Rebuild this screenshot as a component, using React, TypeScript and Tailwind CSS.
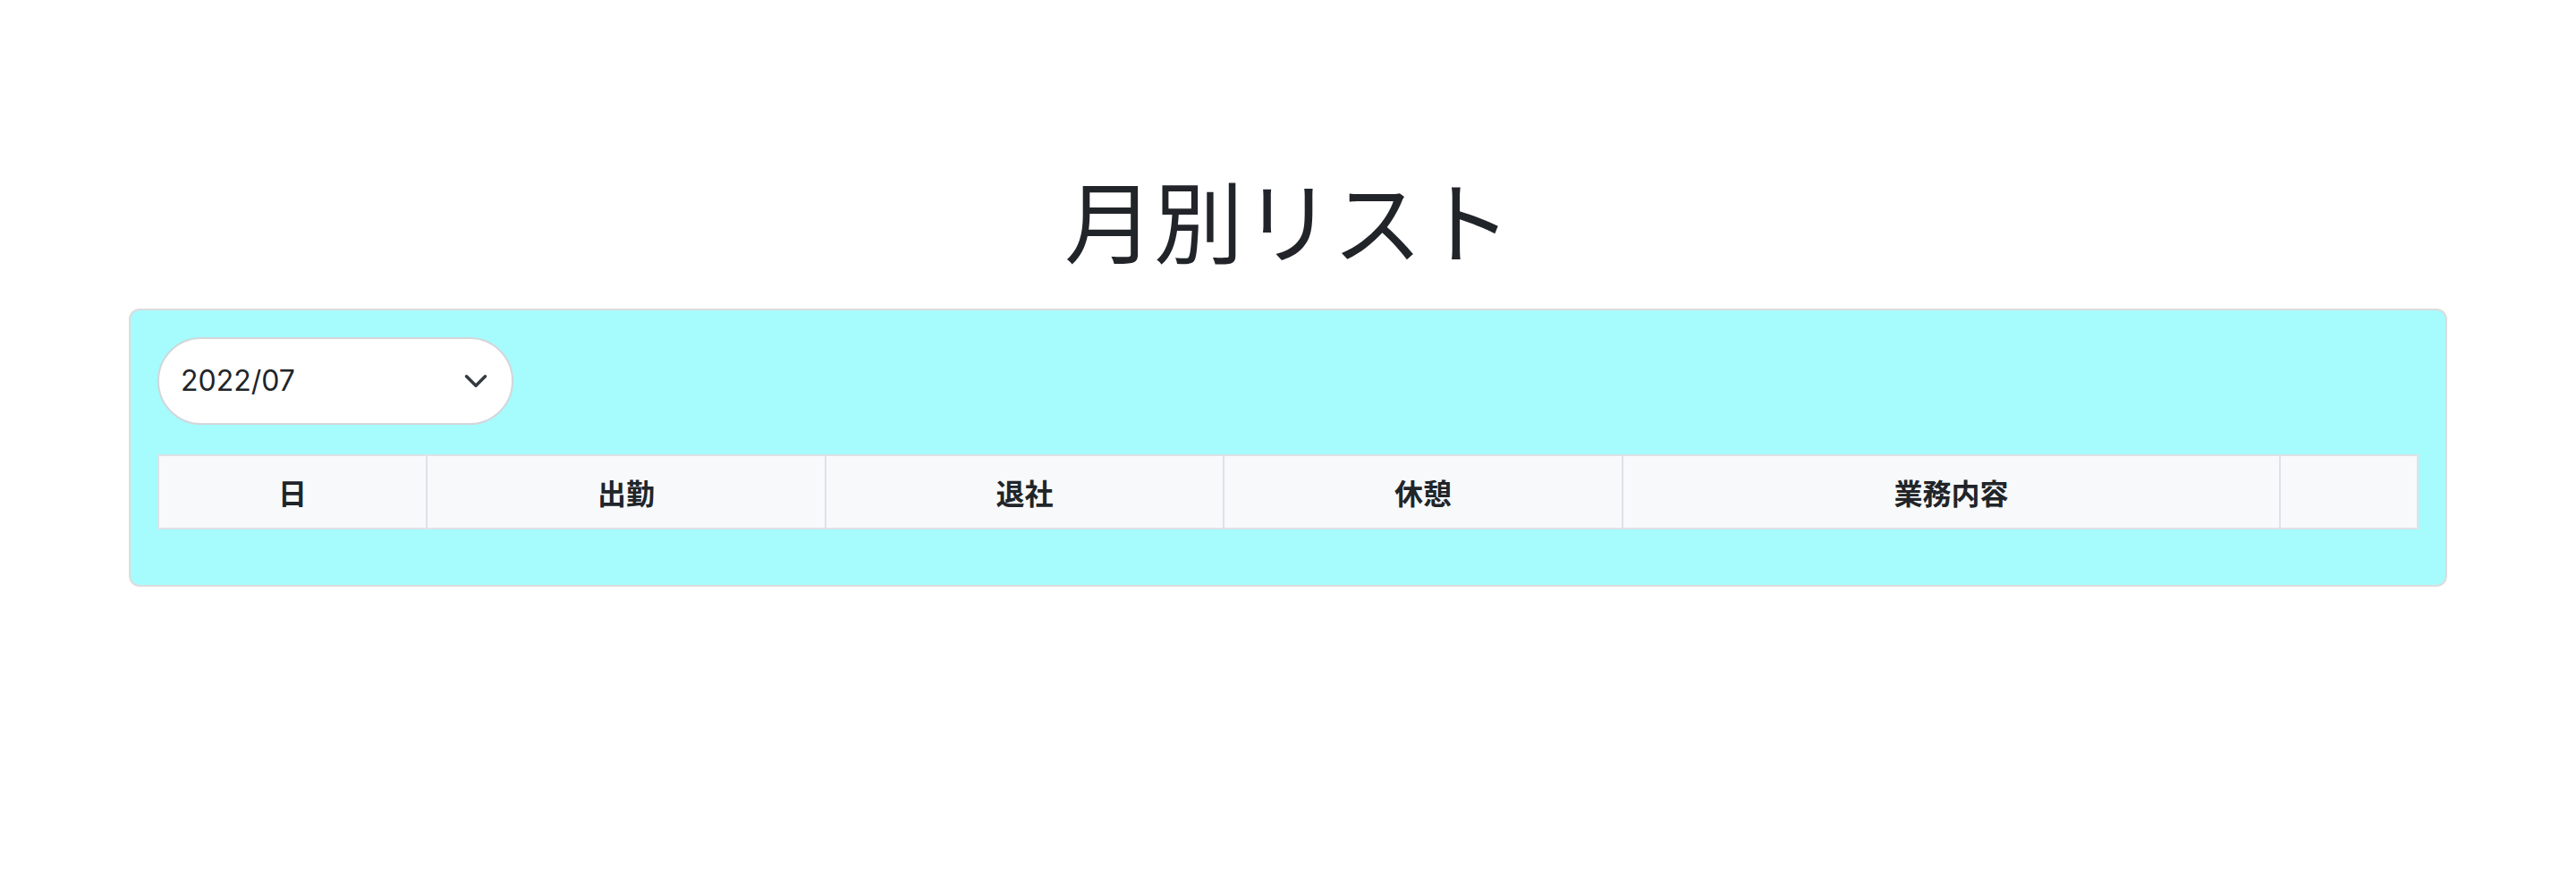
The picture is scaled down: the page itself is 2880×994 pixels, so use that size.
import React from 'react'

const columns = [
  { label: '日', width: 300 },
  { label: '出勤', width: 446 },
  { label: '退社', width: 445 },
  { label: '休憩', width: 446 },
  { label: '業務内容', width: 735 },
  { label: '', width: 154 },
]

function Chevron() {
  return (
    <svg viewBox="0 0 16 16" className="w-7 h-7" fill="none" stroke="#343a40" strokeWidth="2" strokeLinecap="round" strokeLinejoin="round">
      <path d="m2 5 6 6 6-6" />
    </svg>
  )
}

export default function App() {
  return (
    <div className="min-h-[994px] bg-white text-[#212529] font-['Inter','Noto_Sans_CJK_JP',sans-serif]">
      <div className="mx-auto w-[2640px] px-6 pt-[184px]">
        <h1 className="text-center text-[100px] leading-[1.2] font-normal mb-[41px] font-['Noto_Sans_CJK_JP',sans-serif]">
          月別リスト
        </h1>

        <div className="rounded-xl border-2 border-[#dcdcdc] bg-[#a6fbfd] p-[30px] pb-[62px]">
          <button className="flex items-center justify-between w-[398px] h-[98px] rounded-full border-2 border-[#d3d6da] bg-white pl-6 pr-[26px] text-[32px] text-[#212529] mb-[33px]">
            <span>2022/07</span>
            <Chevron />
          </button>

          <table className="w-full table-fixed border-collapse">
            <colgroup>
              {columns.map((c, i) => (
                <col key={i} style={{ width: c.width }} />
              ))}
            </colgroup>
            <thead>
              <tr>
                {columns.map((c, i) => (
                  <th
                    key={i}
                    className="h-[82px] border-2 border-[#dee2e6] bg-[#f8f9fa] text-center align-middle text-[32px] font-bold leading-[48px] py-4 font-['Noto_Sans_CJK_JP',sans-serif]"
                  >
                    {c.label}
                  </th>
                ))}
              </tr>
            </thead>
          </table>
        </div>
      </div>
    </div>
  )
}
